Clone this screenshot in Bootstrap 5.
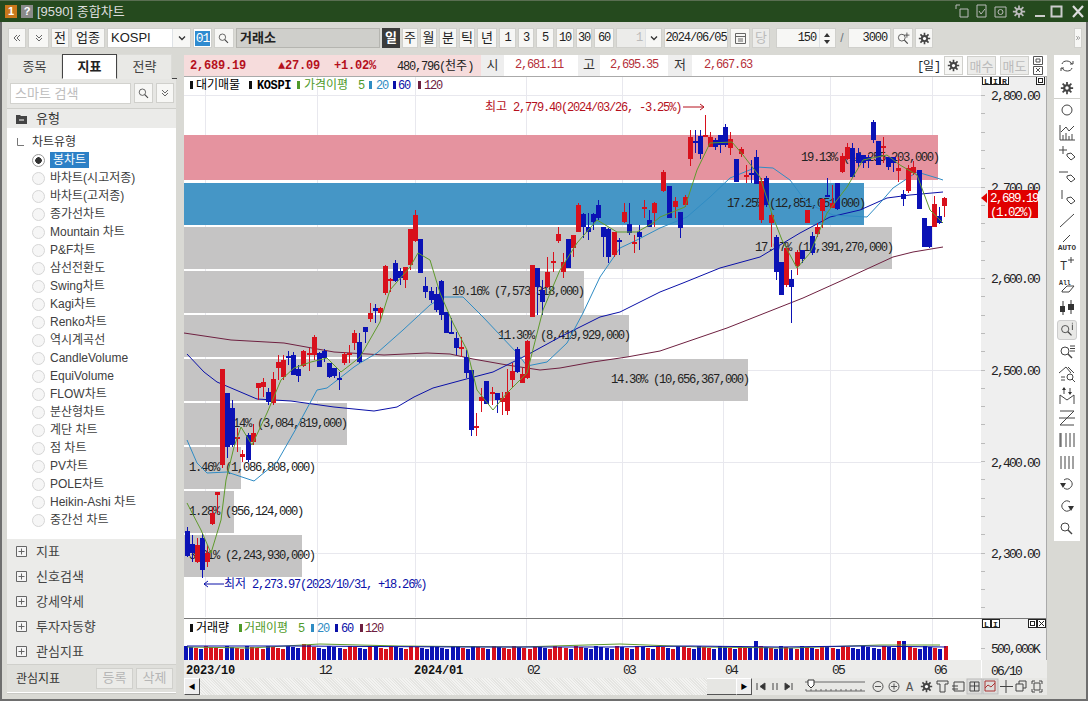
<!DOCTYPE html>
<html lang="ko"><head><meta charset="utf-8"><title>종합차트</title>
<link rel="stylesheet" href="https://cdn.jsdelivr.net/npm/bootstrap@5.3.0/dist/css/bootstrap.min.css">
<style>
html,body{margin:0;height:701px;overflow:hidden;background:#d9d9d4}
body,.tbtn,.form-control{font-family:"Liberation Sans","Noto Sans CJK KR",sans-serif;font-size:12px;color:#333}
.wnd{width:1088px;height:701px;background:#d9d9d4;border:solid #6e6e6e;border-width:0 2px 2px 2px;margin:0}
.ttl{height:22px;background:#254a1e;color:#ddd;margin:0 -2px;padding:0 3px 0 5px;font-size:13px;border-top:1px solid #5a6e52}
.ttl span.num{width:12px;height:13px;font-weight:700;font-size:11px;line-height:13px;text-align:center;color:#fff}
.num1{background:#c9781c}.num2{background:#8a8a8a}
.tbar{height:32px;padding-left:6px;gap:2px}
.tbtn{height:20px;padding:0;background:#f7f7f5;border:1px solid #d0d0cc;border-radius:0;line-height:18px;text-align:center;color:#222;font-size:13px;flex:none;overflow:hidden;white-space:nowrap}
.tnum{font-family:"Liberation Mono",monospace;font-size:12px;letter-spacing:-1.1px}
.w8{width:8px}.w16{width:16px}.w17{width:17px}.w18{width:18px}.w19{width:19px}.w20{width:20px}.w21{width:21px}.w34{width:34px}.w43{width:43px}.w65{width:65px}.w64{width:64px}.w60{width:60px}.w46{width:46px}.w84{width:84px}.w144{width:144px}
.txt-left{text-align:left;padding-left:3px}.txt-right{text-align:right;padding-right:3px}
.dark-on{background:#3b3b3b;color:#fff;font-weight:700;border-color:#3b3b3b}
.grey-fld{background:#cfcfcb;font-weight:700;border-color:#b5b5b0;font-size:13px}
.sel-code{color:#1d5fb0;background:#fff}.sel-code b{background:#2f8bd0;color:#fff;font-weight:400;font-family:"Liberation Mono",monospace;letter-spacing:-1px;padding:0 1px}
.dis{color:#bbb;background:#ececea}
.colL{width:170px;margin-left:5px;height:639px}
.tabs{height:25px;border-bottom:1px solid #444}
.tab1{width:55px;height:25px;line-height:24px;text-align:center;background:#e9e9e6;border:1px solid #dcdcd8;border-bottom:0;font-size:13px;color:#444}
.tab1.on{background:#fff;border:1px solid #444;border-bottom:1px solid #fff;font-weight:700;height:25px;color:#222}
.pnl{background:#fff;margin-right:1px;border-bottom:1px solid #c9c9c5}
.srch{height:29px;background:#e6e6e3;padding:4px 3px 4px 3px;gap:3px}
.srch .form-control{width:121px;height:21px;min-height:0;padding:0 4px;border-radius:0;border-color:#d2d2ce;font-size:13px;flex:none}
.srch .form-control::placeholder{color:#bdbdbd}
.shead{height:20px;background:#ebebe9;padding-left:9px;gap:9px;font-size:13px;border-top:1px solid #cfcfcb}
.treeb{height:411px;padding:5px 0 0 0}
.trow{height:18px;line-height:18px;padding-left:37px;white-space:nowrap;color:#404040}
.trow.head{padding-left:9px;gap:7px;color:#333}
.rad{width:13px;height:13px;border:1px solid #d6d6d6;border-radius:50%;background:#f6f6f6;flex:none;margin-left:-12px;margin-right:1px}
.rad.on{border-color:#999;background:radial-gradient(circle,#333 0 3px,#fff 3.5px)}
.selbl{background:#2c80c6;color:#fff;padding:0 3px;margin-left:-3px;line-height:16px}
.grp{height:25px;background:#ebebe9;padding-left:9px;gap:9px;font-size:13px;color:#444}
.ftr{height:29px;background:#dfdfdb;padding:0 3px 0 9px;border-top:1px solid #d0d0cc;border-bottom:1px solid #fff}
.ftr .tbtn{width:37px;height:21px;color:#b5b5b5;background:#ebebe8;margin-left:3px}
.colM{width:863px;margin-left:7px;margin-top:1px}
.info{height:21px;background:#fff;font-family:"Liberation Mono","Noto Sans CJK KR",monospace;font-size:12px;letter-spacing:-1.2px;white-space:nowrap}
.ipink{width:297px;height:21px;background:#f6dcdc;padding-left:6px;color:#b5101c}
.ipink b{letter-spacing:-.2px}.i1{width:74px}.i3{margin-left:14px}.i4{margin-left:21px;color:#222}
.icell{height:21px;line-height:21px;text-align:center;background:#eee;color:#333;font-size:13px;letter-spacing:0}
.ival{height:21px;line-height:21px;text-align:center;color:#b5303a}
.w23{width:23px}.w74{width:74px}.w22c{width:22px}.w68{width:68px}.w24{width:24px}
.ival.a1{padding-right:4px}.ival.a3{text-align:left;padding-left:12px}
.ko{font-family:"Noto Sans CJK KR",sans-serif;font-size:12px;letter-spacing:0}
.info .tbtn{height:19px;font-size:13px;line-height:17px}
.w29{width:29px}
.chart{display:block;background:#fff}
svg text{font-family:"Liberation Mono","Noto Sans CJK KR",monospace;font-size:12px;letter-spacing:-1.2px}
svg text.lbl{font-size:12.2px;letter-spacing:-1.32px;fill:#222}
svg tspan.ko{font-size:12px;letter-spacing:0}
svg text.ax{font-size:13px;letter-spacing:-1.8px;fill:#222}
svg text.bd{font-weight:700}
.sbar{height:17px;background:repeating-linear-gradient(45deg,#f3f3f1 0 1px,#e5e5e2 1px 2px)}
.sbtn{width:16px;height:17px;background:#eee;border:1px solid #fff;border-right-color:#555;border-bottom-color:#555;flex:none;font-size:7px;line-height:15px;text-align:center;color:#000}
.thumb{width:29px;height:17px;background:#e6e6e3;border-bottom:1px solid #555;border-top:1px solid #fff;flex:none}
.sctrl{width:295px;height:17px;background:#e8e8e5;flex:none}
.colR{width:26px;height:486px;margin-left:7px;margin-top:1px;background:#fff;padding-bottom:2px}
.rico{width:26px;height:22px;flex:none}
.rico svg{width:20px;height:20px;display:block}
.rico.sep{border-bottom:1px solid #cfcfcb}
.rico.act svg{background:#e8e8e6;border:1px solid #ccc;border-radius:3px}
svg .s{fill:none;stroke:#444;stroke-width:1}
svg .f{fill:#333}
</style></head>
<body>
<svg width="0" height="0" class="d-block"><defs>
<symbol id="gr" viewBox="0 0 16 16"><path d="M8 1v14M1 8h14M3 3l10 10M13 3L3 13" stroke="#444" stroke-width="2"/><circle cx="8" cy="8" r="4.4" fill="#444"/><circle cx="8" cy="8" r="2" fill="#fff"/></symbol>
<symbol id="er" viewBox="0 0 20 20"><path d="M10 10l4-1 4 4-4 3-4-4z" fill="none" stroke="#444"/></symbol>
<symbol id="qq" viewBox="0 0 20 20"><circle cx="8" cy="9" r="4" fill="none" stroke="#444"/><path d="M11 12l4 4" stroke="#444" stroke-width="1.4"/></symbol>
<symbol id="dd" viewBox="0 0 10 10"><path d="M2 2l3 3 3-3M2 5l3 3 3-3" fill="none" stroke="#666"/></symbol>
<symbol id="ll" viewBox="0 0 10 10"><path d="M5 2L2 5l3 3M8 2L5 5l3 3" fill="none" stroke="#666"/></symbol>
<symbol id="rr" viewBox="0 0 10 10"><path d="M2 2l3 3-3 3M5 2l3 3-3 3" fill="none" stroke="#666"/></symbol>
<symbol id="dn" viewBox="0 0 10 10"><path d="M2 3.500l3 3 3-3" fill="none" stroke="#333" stroke-width="1.300"/></symbol>
</defs></svg>
<div class="wnd d-flex flex-column">
 <div class="ttl d-flex align-items-center flex-none">
  <span class="num num1">1</span><span class="num num2 ms-1">?</span><span class="ms-1">[9590] 종합차트</span>
  <div class="ms-auto d-flex align-items-center gap-1">
   <svg width="15" height="15" viewBox="0 0 15 15"><path d="M1 1h4M1 1v4M5 5h8v8H5z" fill="none" stroke="#bbb"/></svg>
   <svg width="15" height="15" viewBox="0 0 15 15"><path d="M3 1h9v12H3zM5 7l2 3 4-5" fill="none" stroke="#bbb"/></svg>
   <svg width="15" height="15" viewBox="0 0 15 15"><path d="M2 3h11v10H2z" fill="none" stroke="#bbb"/><circle cx="7.500" cy="8" r="2.500" fill="none" stroke="#bbb"/></svg>
   <svg width="14" height="15" viewBox="0 0 16 16"><path d="M8 1v14M1 8h14M3 3l10 10M13 3L3 13" stroke="#bbb" stroke-width="2"/><circle cx="8" cy="8" r="4" fill="#bbb"/><circle cx="8" cy="8" r="2" fill="#254a1e"/></svg>
   <svg width="12" height="15" viewBox="0 0 12 15" class="ms-1"><path d="M1 12h10" stroke="#ccc" stroke-width="2"/></svg>
   <svg width="13" height="15" viewBox="0 0 13 15"><path d="M1.500 2.500h10v10h-10z" fill="none" stroke="#ccc" stroke-width="2"/></svg>
   <svg width="14" height="15" viewBox="0 0 14 15" class="ms-1"><path d="M2 2l10 11M12 2L2 13" stroke="#ddd" stroke-width="2.200"/></svg>
  </div>
 </div>
 <div class="tbar d-flex align-items-center flex-none">
  <div class="tbtn w18 d-flex align-items-center justify-content-center"><svg width="10" height="10"><use href="#ll"/></svg></div>
  <div class="tbtn w21 d-flex align-items-center justify-content-center"><svg width="10" height="10"><use href="#dd"/></svg></div>
  <div class="tbtn w18">전</div><div class="tbtn w34">업종</div>
  <div class="tbtn w84 d-flex"><span class="flex-grow-1 txt-left bg-white">KOSPI</span><span class="w18 border-start d-flex align-items-center justify-content-center"><svg width="10" height="10"><use href="#dn"/></svg></span></div>
  <div class="tbtn w19 sel-code"><b>01</b></div>
  <div class="tbtn w20 d-flex align-items-center justify-content-center"><svg width="16" height="16" viewBox="0 0 20 20"><use href="#qq"/></svg></div>
  <div class="tbtn w144 grey-fld txt-left">거래소</div>
  <div class="tbtn w18 dark-on">일</div><div class="tbtn w16">주</div><div class="tbtn w17">월</div><div class="tbtn w18">분</div><div class="tbtn w16">틱</div><div class="tbtn w20">년</div>
  <div class="tbtn w17 tnum">1</div><div class="tbtn w16 tnum">3</div><div class="tbtn w18 tnum">5</div><div class="tbtn w18 tnum">10</div><div class="tbtn w16 tnum">30</div><div class="tbtn w20 tnum">60</div>
  <div class="tbtn w46 d-flex"><span class="flex-grow-1 txt-right tnum dis">1</span><span class="w16 border-start d-flex align-items-center justify-content-center"><svg width="10" height="10"><use href="#dn"/></svg></span></div>
  <div class="tbtn w64 tnum">2024/06/05</div>
  <div class="tbtn w20 d-flex align-items-center justify-content-center"><svg width="13" height="13" viewBox="0 0 13 13"><path d="M1.500 1.500h10v10h-10zM1.500 4.500h10M4 7h5M4 9h5" fill="none" stroke="#666"/></svg></div>
  <div class="tbtn w18 dis">당</div>
  <div class="tbtn w60 d-flex ms-1"><span class="flex-grow-1 txt-right tnum">150</span><span class="w16 border-start d-flex flex-column"><svg width="14" height="18" viewBox="0 0 14 18"><path d="M7 4l3 4H4zM7 15l3-4H4z" fill="#333"/></svg></span></div>
  <div class="w8 text-center text-secondary">/</div>
  <div class="tbtn w43 txt-right tnum">3000</div>
  <div class="tbtn w20 d-flex align-items-center justify-content-center"><svg width="17" height="17" viewBox="0 0 20 20"><use href="#qq"/><path d="M14 3v6M11 6h6" stroke="#444"/></svg></div>
  <div class="tbtn w18 d-flex align-items-center justify-content-center"><svg width="13" height="13" viewBox="0 0 16 16"><use href="#gr"/></svg></div>
  <div class="tbtn w8 ms-auto me-1 d-flex align-items-center justify-content-center"><svg width="8" height="8" viewBox="0 0 10 10"><use href="#rr"/></svg></div>
 </div>
 <div class="d-flex flex-none">
  <div class="colL d-flex flex-column">
   <div class="tabs d-flex"><div class="tab1">종목</div><div class="tab1 on">지표</div><div class="tab1">전략</div></div>
   <div class="pnl d-flex flex-column">
    <div class="srch d-flex">
     <input class="form-control" placeholder="스마트 검색">
     <div class="tbtn w19 d-flex align-items-center justify-content-center ms-n1"><svg width="16" height="16" viewBox="0 0 20 20"><use href="#qq"/></svg></div>
     <div class="tbtn w18 d-flex align-items-center justify-content-center"><svg width="10" height="10"><use href="#dd"/></svg></div>
    </div>
    <div class="shead d-flex align-items-center"><svg width="11" height="10" viewBox="0 0 11 10"><path d="M0 1h4l1 1h6v8H0z" fill="#444"/><path d="M3 6h5" stroke="#fff"/></svg><span>유형</span></div>
    <div class="treeb">
     <div class="trow head d-flex align-items-center"><svg width="9" height="9" viewBox="0 0 9 9"><path d="M1.500 0v7.500H8" fill="none" stroke="#777"/></svg><span>차트유형</span></div>
     <div class="trow d-flex align-items-center"><i class="rad on"></i><span class="selbl ms-1">봉차트</span></div>
     <div class="trow d-flex align-items-center"><i class="rad"></i><span class="ms-1">바차트(시고저종)</span></div>
     <div class="trow d-flex align-items-center"><i class="rad"></i><span class="ms-1">바차트(고저종)</span></div>
     <div class="trow d-flex align-items-center"><i class="rad"></i><span class="ms-1">종가선차트</span></div>
     <div class="trow d-flex align-items-center"><i class="rad"></i><span class="ms-1">Mountain 차트</span></div>
     <div class="trow d-flex align-items-center"><i class="rad"></i><span class="ms-1">P&amp;F차트</span></div>
     <div class="trow d-flex align-items-center"><i class="rad"></i><span class="ms-1">삼선전환도</span></div>
     <div class="trow d-flex align-items-center"><i class="rad"></i><span class="ms-1">Swing차트</span></div>
     <div class="trow d-flex align-items-center"><i class="rad"></i><span class="ms-1">Kagi차트</span></div>
     <div class="trow d-flex align-items-center"><i class="rad"></i><span class="ms-1">Renko차트</span></div>
     <div class="trow d-flex align-items-center"><i class="rad"></i><span class="ms-1">역시계곡선</span></div>
     <div class="trow d-flex align-items-center"><i class="rad"></i><span class="ms-1">CandleVolume</span></div>
     <div class="trow d-flex align-items-center"><i class="rad"></i><span class="ms-1">EquiVolume</span></div>
     <div class="trow d-flex align-items-center"><i class="rad"></i><span class="ms-1">FLOW차트</span></div>
     <div class="trow d-flex align-items-center"><i class="rad"></i><span class="ms-1">분산형차트</span></div>
     <div class="trow d-flex align-items-center"><i class="rad"></i><span class="ms-1">계단 차트</span></div>
     <div class="trow d-flex align-items-center"><i class="rad"></i><span class="ms-1">점 차트</span></div>
     <div class="trow d-flex align-items-center"><i class="rad"></i><span class="ms-1">PV차트</span></div>
     <div class="trow d-flex align-items-center"><i class="rad"></i><span class="ms-1">POLE차트</span></div>
     <div class="trow d-flex align-items-center"><i class="rad"></i><span class="ms-1">Heikin-Ashi 차트</span></div>
     <div class="trow d-flex align-items-center"><i class="rad"></i><span class="ms-1">중간선 차트</span></div>
    </div>
    <div class="grp d-flex align-items-center"><svg width="11" height="11" viewBox="0 0 11 11"><path d="M.5.500h10v10H.500zM2.500 5.500h6M5.500 2.500v6" fill="#f5f5f5" stroke="#666"/></svg><span>지표</span></div>
    <div class="grp d-flex align-items-center"><svg width="11" height="11" viewBox="0 0 11 11"><path d="M.5.500h10v10H.500zM2.500 5.500h6M5.500 2.500v6" fill="#f5f5f5" stroke="#666"/></svg><span>신호검색</span></div>
    <div class="grp d-flex align-items-center"><svg width="11" height="11" viewBox="0 0 11 11"><path d="M.5.500h10v10H.500zM2.500 5.500h6M5.500 2.500v6" fill="#f5f5f5" stroke="#666"/></svg><span>강세약세</span></div>
    <div class="grp d-flex align-items-center"><svg width="11" height="11" viewBox="0 0 11 11"><path d="M.5.500h10v10H.500zM2.500 5.500h6M5.500 2.500v6" fill="#f5f5f5" stroke="#666"/></svg><span>투자자동향</span></div>
    <div class="grp d-flex align-items-center"><svg width="11" height="11" viewBox="0 0 11 11"><path d="M.5.500h10v10H.500zM2.500 5.500h6M5.500 2.500v6" fill="#f5f5f5" stroke="#666"/></svg><span>관심지표</span></div>
    <div class="ftr d-flex align-items-center"><span class="me-auto">관심지표</span><div class="tbtn">등록</div><div class="tbtn">삭제</div></div>
   </div>
  </div>
  <div class="colM d-flex flex-column">
   <div class="info d-flex align-items-center">
    <div class="ipink d-flex align-items-center"><b class="i1">2,689.19</b><b class="i3">▲27.09</b><b class="i3">+1.02%</b><span class="i4">480,796(<span class="ko">천주</span>)</span></div>
    <div class="icell w23">시</div><div class="ival a1 w74">2,681.11</div><div class="icell w22c">고</div><div class="ival w68">2,695.35</div><div class="icell w24">저</div><div class="ival a3 w74">2,667.63</div>
    <div class="ms-auto d-flex align-items-center gap-1 pe-1">
     <span class="text-dark">[<span class="ko">일</span>]</span>
     <div class="tbtn w19 d-flex align-items-center justify-content-center"><svg width="13" height="13" viewBox="0 0 16 16"><use href="#gr"/></svg></div>
     <div class="tbtn w29 dis ko">매수</div><div class="tbtn w29 dis ko">매도</div>
     <svg width="10" height="19" viewBox="0 0 10 19"><path d="M.5.500h9v8h-9zM3 3h4v3H3zM.5 10.500h9v8h-9zM3 12l4 4M7 12l-4 4" fill="none" stroke="#555"/></svg>
    </div>
   </div>
   <svg id="pr" class="chart" width="863" height="542" viewBox="184 76 863 542"></svg>
   <svg id="vl" class="chart" width="863" height="42" viewBox="184 618 863 42"></svg>
   <svg id="dt" class="d-block" width="863" height="18" viewBox="184 660 863 18"></svg>
   <div class="d-flex sbar">
    <div class="sbtn">◀</div><div class="flex-grow-1"></div><div class="thumb"></div><div class="sbtn">▶</div>
    <svg class="sctrl" viewBox="752 678 295 17" width="295" height="17">
     <path d="M757 683v7M765 683l-5 3.500 5 3.500zM773 683v7M777 683v7M785 683l5 3.500-5 3.500zM792 683v7" fill="#333" stroke="#444"/>
     <path d="M805 682h60M806 691h59" stroke="#666"/><path d="M806 689v2M811 689v2M816 689v2M821 689v2M826 689v2M831 689v2M836 689v2M841 689v2M846 689v2M851 689v2M856 689v2M861 689v2" stroke="#666"/>
     <path d="M808 680h6v5l-3 3-3-3z" fill="#fff" stroke="#333"/>
     <circle cx="878" cy="686.500" r="5" fill="none" stroke="#555"/><path d="M875 686.500h6" stroke="#555"/>
     <circle cx="894" cy="686.500" r="5" fill="none" stroke="#555"/><path d="M891 686.500h6M894 683.500v6" stroke="#555"/>
     <text x="906" y="691" fill="#555" style="font-size:12px">A</text>
     <use href="#gr" x="920" y="680" width="13" height="13"/>
     <path d="M937 681h11v3h-3v8h-5v-8h-3z" fill="none" stroke="#444"/>
     <path d="M954 682h10v9h-10zM952 686h6M952 689h6" fill="none" stroke="#444"/>
     <rect x="967" y="679" width="15" height="15" fill="#dcdcda" stroke="#bbb"/><path d="M970 682h9v9h-9zM974.500 682v9M970 686h9" fill="none" stroke="#444"/>
     <rect x="983" y="679" width="15" height="15" fill="#dcdcda" stroke="#bbb"/><path d="M985 681h10v10h-10zM985 688l3-3 3 2 4-4" fill="none" stroke="#a33"/>
     <path d="M1006 680v13M1000 686.500h13" stroke="#444"/>
     <path d="M1016 684h7v7h-7zM1019 684v-3h7v7h-3" fill="none" stroke="#444"/>
     <path d="M1032 681h3M1032 681v3M1042 681h-3M1042 681v3M1032 692h3M1032 692v-3M1042 692h-3M1042 692v-3M1034 683h6v7h-6z" fill="none" stroke="#444"/>
    </svg>
   </div>
  </div>
  <div class="colR d-flex flex-column align-items-center">
   <div class="rico d-flex align-items-center justify-content-center"><svg viewBox="0 0 20 20"><path class="s" d="M5 8c1-4 8-4 10 0M15 12c-1 4-8 4-10 0M13 8h3V5M7 12H4v3"/></svg></div>
   <div class="rico sep d-flex align-items-center justify-content-center"><svg viewBox="0 0 20 20"><use href="#gr" x="3" y="3" width="14" height="14"/></svg></div>
   <div class="rico d-flex align-items-center justify-content-center"><svg viewBox="0 0 20 20"><circle class="s" cx="10" cy="10" r="5"/></svg></div>
   <div class="rico d-flex align-items-center justify-content-center"><svg viewBox="0 0 20 20"><path class="s" d="M3 3v15h15M6 18v-5M9 18v-7M12 18v-4M15 18v-6M4 10l5-5 3 4 5-5"/></svg></div>
   <div class="rico d-flex align-items-center justify-content-center"><svg viewBox="0 0 20 20"><path class="s" d="M6 2v8M2 6h8"/><use href="#er"/></svg></div>
   <div class="rico d-flex align-items-center justify-content-center"><svg viewBox="0 0 20 20"><path class="s" d="M2 6h9"/><use href="#er"/></svg></div>
   <div class="rico d-flex align-items-center justify-content-center"><svg viewBox="0 0 20 20"><path class="s" d="M5 2v9"/><use href="#er"/></svg></div>
   <div class="rico d-flex align-items-center justify-content-center"><svg viewBox="0 0 20 20"><path class="s" d="M3 17L17 4"/></svg></div>
   <div class="rico d-flex align-items-center justify-content-center"><svg viewBox="0 0 20 20"><path class="s" d="M6 10l7-7"/><text x="1" y="18" style="font-size:7.500px;letter-spacing:0;font-weight:700" fill="#333">AUTO</text></svg></div>
   <div class="rico d-flex align-items-center justify-content-center"><svg viewBox="0 0 20 20"><text x="3" y="16" style="font-size:12px;letter-spacing:0" fill="#333">T</text><path class="s" d="M14 3v6M11 6h6"/></svg></div>
   <div class="rico d-flex align-items-center justify-content-center"><svg viewBox="0 0 20 20"><text x="2" y="9" style="font-size:6.500px;letter-spacing:0;font-weight:700" fill="#333">All</text><path class="s" d="M5 15l5-5h7l-5 6H5z"/></svg></div>
   <div class="rico d-flex align-items-center justify-content-center"><svg viewBox="0 0 20 20"><path d="M6 3v14M14 2v14" stroke="#333"/><path class="f" d="M3 8h5v6H3zM11 6h6v6h-6z"/></svg></div>
   <div class="rico act d-flex align-items-center justify-content-center"><svg viewBox="0 0 20 20"><use href="#qq"/><path class="s" d="M16 4v6M16 2v1"/></svg></div>
   <div class="rico d-flex align-items-center justify-content-center"><svg viewBox="0 0 20 20"><use href="#qq"/><path class="s" d="M13 4h5M13 6.500h5M13 9h5"/></svg></div>
   <div class="rico d-flex align-items-center justify-content-center"><svg viewBox="0 0 20 20"><path class="s" d="M2 9l7-6 5 6M4 13h4M4 16h4M11 3l6 6"/><circle class="s" cx="13" cy="13" r="3"/><path class="s" d="M15 15l3 3"/></svg></div>
   <div class="rico d-flex align-items-center justify-content-center"><svg viewBox="0 0 20 20"><path class="s" d="M3 18v-9l7 5 7-5v9M7 2v6M13 2v6"/><path class="f" d="M7 1l2 3H5zM13 9l2-3h-4z"/></svg></div>
   <div class="rico d-flex align-items-center justify-content-center"><svg viewBox="0 0 20 20"><path class="s" d="M3 3h14L3 17h14M2 10h16"/></svg></div>
   <div class="rico d-flex align-items-center justify-content-center"><svg viewBox="0 0 20 20"><path class="s" d="M3 3v14M4 3v14M9 3v14M13 3v14M17 3v14"/></svg></div>
   <div class="rico d-flex align-items-center justify-content-center"><svg viewBox="0 0 20 20"><path class="s" d="M4 4v13M8 4v13M12 4v13M16 4v13"/></svg></div>
   <div class="rico d-flex align-items-center justify-content-center"><svg viewBox="0 0 20 20"><path class="s" d="M7 6a5 5 0 1 1 0 8"/><path class="f" d="M3 9h6l-3 5z"/></svg></div>
   <div class="rico d-flex align-items-center justify-content-center"><svg viewBox="0 0 20 20"><path class="s" d="M13 6a5 5 0 1 0 0 8"/><path class="f" d="M11 10h6l-3 5z"/></svg></div>
   <div class="rico d-flex align-items-center justify-content-center"><svg viewBox="0 0 20 20"><use href="#qq"/></svg></div>
  </div>
 </div>
</div>
<script src="https://cdn.jsdelivr.net/npm/bootstrap@5.3.0/dist/js/bootstrap.bundle.min.js"></script>
<script>
const RED='#d8101c',BLU='#0b12b5';
const rect=(x,y,w,h,f)=>`<rect x="${x}" y="${y}" width="${w}" height="${h}" fill="${f}"/>`;
const line=(a,b,c,d,s)=>`<path d="M${a} ${b}L${c} ${d}" stroke="${s}" fill="none" shape-rendering="crispEdges"/>`;
const G7=[184,340,'b 8 560 650 573 647|b 24 585 665 612 640|r 38 595 668 615 665|b 54 580 715 595 690|r 68 615 680 640 665|r 84 500 555 520 552|r 99 455 520 455 465|r 114 87 385 87 375|b 129 160 355 160 320|b 144 180 320 205 315|r 160 265 335 290 296|r 175 330 365 342 352|b 191 280 365 285 360|r 206 252 315 278 305|r 222 128 180 130 143|r 237 115 170 125 140|b 252 145 195 155 185|r 267 95 195 117 190|r 282 45 120 65 85|r 297 45 120 60 112|b 313 32 75 47 50|b 327 35 105 45 105|b 342 75 125 87 108|r 358 30 80 32 78|r 375 25 92 40 45|r 390 -15 60 -10 45|b 405 35 82 38 80|b 420 28 65 32 55|b 435 70 115 70 112|b 450 85 115 85 108|b 465 95 150 115 118|r 480 35 75 42 70|r 495 15 70 40 45|r 510 -30 30 -20 10|b 525 -20 70 5 65'];
const G9=[360,200,'b 14 380 430 380 395|r 30 310 365 340 358|b 45 312 370 325 332|r 60 322 360 325 338|r 75 195 285 197 278|r 90 235 275 238 243|b 105 180 245 188 242|b 120 205 255 212 235|r 135 202 265 202 240|r 150 87 210 87 195|r 165 30 125 45 122|b 180 117 220 117 220|b 196 232 295 258 275|b 212 260 310 272 300|b 228 260 335 282 330|b 242 240 360 242 345|b 258 335 400 335 400|b 272 355 403 397 403|b 288 395 465 415 445|r 303 412 470 440 445|b 318 450 535 470 520|b 333 510 708 510 690|r 348 640 708 677 681|r 363 565 635 590 603|b 378 543 613 543 613|r 396 562 615 575 578|b 411 580 640 580 600|r 426 575 645 595 605|r 440 508 645 575 632|r 456 490 560 512 540|b 471 440 520 447 517|r 486 505 550 522 548|r 501 420 538 422 535|r 516 195 352 195 352|b 531 205 345 205 262|b 547 240 345 270 305|r 562 170 265 215 262|r 578 155 215 182 187|r 593 80 130 103 122|r 608 160 235 185 215|b 624 118 205 118 205|r 639 105 170 105 145|r 654 10 95 15 95|b 669 40 115 42 80|b 684 40 120 82 95|b 699 40 90 42 65|b 714 0 60 15 55|b 729 82 170 82 110|b 745 85 188 88 170|r 761 95 172 95 165|b 776 115 165 120 123|r 791 10 70 35 65|b 806 10 105 72 100|r 821 105 160 125 132|b 836 75 150 95 110|r 851 0 55 20 25|b 866 30 80 60 80|r 881 5 80 10 38'];
const G8=[660,100,'r 10 210 275 215 272|b 28 257 355 257 355|r 45 290 355 303 322|b 60 335 415 335 385|r 75 285 320 292 315|r 90 90 198 112 178|b 105 90 160 122 130|b 120 90 178 108 162|r 136 45 110 105 110|r 150 95 140 110 140|b 165 115 150 120 140|b 180 105 160 105 135|b 195 72 140 80 135|r 211 95 165 118 145|b 228 178 245 178 245|r 243 140 170 148 162|r 258 195 250 225 228|b 273 180 250 218 222|b 288 150 252 170 252|r 303 235 370 243 360|b 318 228 320 235 315|r 333 340 440 345 370|b 348 405 540 412 515|b 363 485 585 485 585|r 378 440 560 445 555|b 394 510 668 538 562|r 411 450 525 457 498|b 426 450 490 450 478|r 441 330 370 330 368|b 456 395 465 408 460|r 471 370 410 382 402|r 486 295 385 297 332|b 501 235 290 285 288|r 516 255 325 310 323|b 531 250 330 250 328|r 546 160 218 168 215|r 561 130 180 140 178|b 577 130 235 145 232|b 593 145 200 158 188|b 608 165 205 165 190|b 624 165 205 170 182|b 639 60 130 65 120|b 654 122 195 122 195|r 669 110 190 138 142|b 684 170 210 170 200|b 699 170 215 172 190|r 714 170 245 205 212|b 729 270 318 283 298|r 744 195 280 205 272|r 760 182 225 200 220|b 776 210 328 210 328|b 791 355 442 355 442|b 806 378 445 378 442|r 821 288 380 312 380|b 836 320 372 348 368|r 851 290 352 295 318'];
const C=[];
[G7,G9,G8].forEach(([ox,oy,s])=>s.split('|').forEach(t=>{const [c,x,a,b,d,e]=t.split(' ');const px=Math.round(ox+(+x)/3);
 C.push({c:c=='r'?RED:BLU,x:px,wt:Math.round(oy+ +a/3),wb:Math.round(oy+ +b/3),bt:Math.round(oy+ +d/3),bb:Math.round(oy+ +e/3)});}));
const M5='187,503 201,530 211,553 221,520 226,480 234,447 241,427 252,445 267,413 281,380 294,368 311,362 327,358 341,372 350,365 360,357 380,322 390,290 410,267 418,253 430,260 440,293 453,323 467,350 477,390 493,410 507,393 527,373 543,310 560,270 577,243 597,220 617,232 637,232 653,223 660,217 685,207 697,170 710,143 732,142 743,155 760,177 773,217 782,240 797,268 810,253 827,213 847,187 863,160 887,155 900,165 917,175 930,210 943,223';
const M20='187,440 197,463 207,473 227,472 254,481 277,462 297,427 317,390 327,388 354,367 360,363 377,353 403,330 430,305 443,297 463,297 483,317 517,353 527,366 547,362 567,343 583,313 600,277 620,248 637,240 660,228 687,217 710,197 730,178 757,167 773,168 790,180 807,203 833,215 867,217 880,203 893,188 917,172 937,178 943,180';
const M60='187,354 204,372 217,382 257,399 291,401 334,407 374,411 397,407 414,397 433,388 470,378 493,372 527,355 560,337 600,317 620,312 660,292 683,283 720,268 760,257 800,233 830,217 860,210 887,198 910,195 943,192';
const M120='184,333 231,340 284,343 334,352 384,355 427,353 450,354 473,359 507,365 540,370 560,368 593,362 627,357 660,351 727,328 760,315 803,298 843,280 893,257 913,252 943,247';
const pl=(p,s)=>`<polyline points="${p}" fill="none" stroke="${s}" stroke-width="1"/>`;
let h='';
[95,187,278,370,462,553].forEach(y=>h+=line(184,y,981,y,'#e8e8ee'));
[205,317,415,526,622,723,830,932].forEach(x=>h+=line(x,77,x,617,'#e8e8ee'));
[[938,135,'#e5939f'],[864,183,'#4596c6'],[892,227,'#c5c4c4'],[584,271,'#c5c4c4'],[629,315,'#c5c4c4'],[748,359,'#c5c4c4'],[347,403,'#c5c4c4'],[241,447,'#c5c4c4'],[234,491,'#c5c4c4'],[302,535,'#c5c4c4']].forEach(([r,y,f])=>h+=rect(184,y,r-184,42+(y==135?3:0),f));
[['19.13% (14,255,203,000)',801,161],['17.25% (12,851,051,000)',727,207],['17.97% (13,391,270,000)',755,251],['10.16% (7,573,318,000)',452,295],['11.30% (8,419,929,000)',498,339],['14.30% (10,656,367,000)',611,383],['4.14% (3,084,819,000)',221,427],['1.46% (1,086,808,000)',189,471],['1.28% (956,124,000)',189,515],['3.01% (2,243,930,000)',189,559]].forEach(([t,x,y])=>h+=`<text class="lbl" x="${x}" y="${y}">${t}</text>`);
h+=pl(M120,'#6e2040')+pl(M60,'#0a10a8')+pl(M20,'#2f8cc4');
C.forEach(k=>{h+=rect(k.x,k.wt,1,k.wb-k.wt,k.c);h+=rect(k.x-2,k.bt,5,Math.max(k.bb-k.bt,2),k.c)});
h+=pl(M5,'#5f9a2c');
const mk=(x,y,c)=>rect(x,y,3,8,c);
h+=mk(190,81,'#111')+`<text x="196" y="89"><tspan class="ko">대기매물</tspan></text>`+mk(249,81,'#111')+`<text class="bd" x="257" y="89" style="letter-spacing:-.4px">KOSPI</text>`+mk(297,81,'#4f9a2a')+`<text x="304" y="89" fill="#4f9a2a"><tspan class="ko">가격이평</tspan></text><text x="358" y="89" fill="#4f9a2a">5</text>`+mk(369,81,'#2f8cc4')+`<text x="376" y="89" fill="#2f8cc4">20</text>`+mk(393,81,'#0a10a8')+`<text x="398" y="89" fill="#0a10a8">60</text>`+mk(418,81,'#6e2040')+`<text x="424" y="89" fill="#6e2040">120</text>`;
h+=`<text x="485" y="111" fill="#b5101c"><tspan class="ko">최고</tspan> 2,779.40(2024/03/26, -3.25%)</text><path d="M683 107h21M700 104l4 3-4 3" fill="none" stroke="#b5101c"/>`;
h+=`<path d="M204 584h20M208 581l-4 3 4 3" fill="none" stroke="#0a10a8"/><text x="224" y="588" fill="#0a10a8"><tspan class="ko">최저</tspan> 2,273.97(2023/10/31, +18.26%)</text>`;
h+=rect(981,76,66,542,'#efefef');
for(let y=95-18.3;y<617;y+=18.3)h+=line(981,Math.round(y),985,Math.round(y),'#bbb');
[['2,800.00',95],['2,700.00',187],['2,600.00',278],['2,500.00',370],['2,400.00',462],['2,300.00',553]].forEach(([t,y])=>h+=`<text class="ax" x="991" y="${y+5}">${t}</text>`);
const box=(x,y,l)=>`<rect x="${x+.5}" y="${y+.5}" width="8" height="8" fill="#fff" stroke="#222"/><text x="${x+2}" y="${y+7.500}" style="font-size:8px;letter-spacing:0;font-weight:700" fill="#222">${l}</text>`;
h+=box(982,76,'L')+box(991,76,'I')+box(1000,76,'R')+`<rect x="1036.500" y="76.500" width="8" height="8" fill="#fff" stroke="#222"/><rect x="1038.500" y="78.500" width="4" height="4" fill="#fff" stroke="#222"/>`;
h+=`<path d="M981 198l6-5v10z" fill="#e00000"/>`+rect(988,190,50,28,'#e00000')+`<text x="990" y="202" fill="#fff" style="font-size:12.500px;letter-spacing:-1.500px">2,689.19</text><text x="990" y="216" fill="#fff" style="font-size:12.500px;letter-spacing:-1.500px">(1.02%)</text>`;
h+=line(184,76,1047,76,'#aaa')+line(1046.5,76,1046.5,618,'#aaa');
document.getElementById('pr').innerHTML=h;
let v='';
[205,317,415,526,622,723,830,932].forEach(x=>v+=line(x,618,x,660,'#e8e8ee'));
const sorted=[...C].sort((a,b)=>a.x-b.x);
const hs={23:16,24:15,111:19,112:14,139:19,140:19,141:13,100:14};
const step=(946-186)/(sorted.length-1);
sorted.forEach((k,i)=>{const hh=hs[i]||(11+((i*7+3)%4));const x=Math.floor(186+i*step);v+=rect(x-2,660-hh,4,hh,k.c)});
v+=pl('187,647 250,648 320,644 400,646 520,647 620,644 700,647 790,648 880,645 940,645','#5f9a2c')+pl('187,646 290,646 460,647 610,647 690,646 780,647 860,646 946,647','#0a10a8');
v+=mk(190,624,'#111')+`<text x="196" y="632"><tspan class="ko">거래량</tspan></text>`+mk(239,624,'#4f9a2a')+`<text x="244" y="632" fill="#4f9a2a"><tspan class="ko">거래이평</tspan></text><text x="298" y="632" fill="#4f9a2a">5</text>`+mk(311,624,'#2f8cc4')+`<text x="317" y="632" fill="#2f8cc4">20</text>`+mk(335,624,'#0a10a8')+`<text x="341" y="632" fill="#0a10a8">60</text>`+mk(360,624,'#6e2040')+`<text x="365" y="632" fill="#6e2040">120</text>`;
v+=rect(981,618,66,42,'#efefef')+box(982,619,'L')+box(991,619,'I')+`<rect x="1028.500" y="619.500" width="8" height="8" fill="#fff" stroke="#222"/><rect x="1030.500" y="621.500" width="4" height="4" fill="#fff" stroke="#222"/><rect x="1037.500" y="619.500" width="8" height="8" fill="#fff" stroke="#222"/><path d="M1039 621l5 5M1044 621l-5 5" stroke="#222"/>`;
v+=line(981,648,985,648,'#bbb')+`<text class="ax" x="991" y="653">500,000K</text>`;
v+=line(184,618,1047,618,'#777')+line(1046.5,618,1046.5,660,'#aaa');
document.getElementById('vl').innerHTML=v;
let d=rect(184,660,863,18,'#ececea');
d+=`<text class="bd" x="186" y="674" fill="#111" style="letter-spacing:-.2px">2023/10</text><text class="bd" x="414" y="674" fill="#111" style="letter-spacing:-.2px">2024/01</text>`;
[['12',319],['02',527],['03',623],['04',725],['05',832],['06',934]].forEach(([t,x])=>d+=`<text class="ax" x="${x}" y="674">${t}</text>`);
d+=line(981,660,981,678,'#fff')+`<text class="ax" x="991" y="675">06/10</text>`;
document.getElementById('dt').innerHTML=d;
</script>
</body></html>
